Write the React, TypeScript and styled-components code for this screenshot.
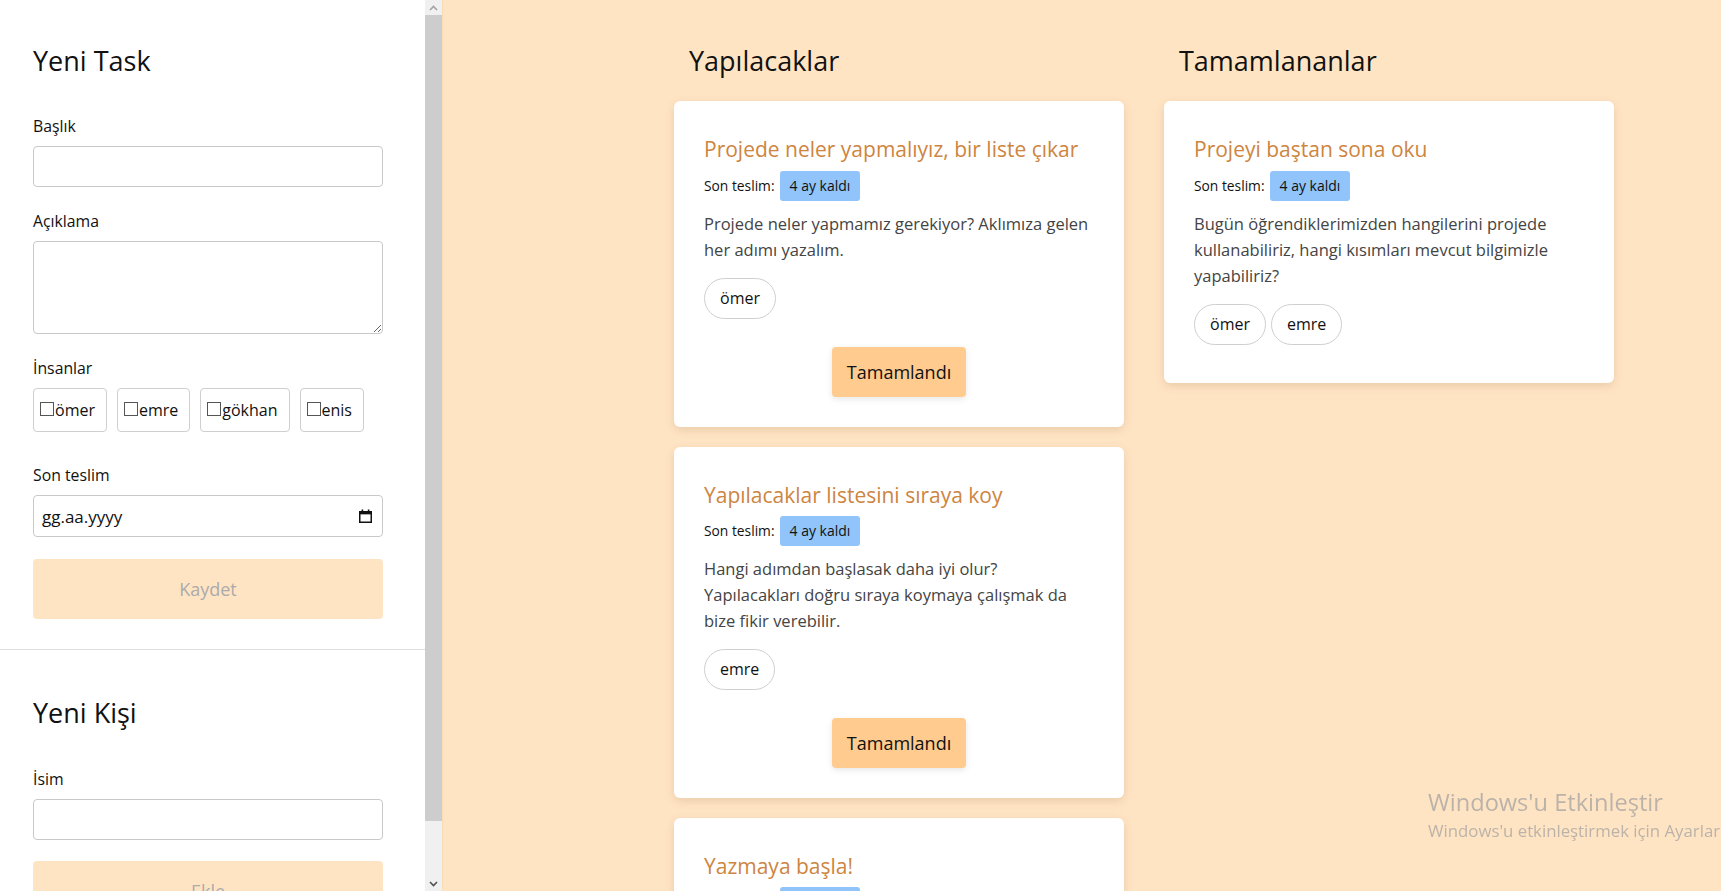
import React from "react";
import styled, { createGlobalStyle } from "styled-components";

const GlobalStyle = createGlobalStyle`
  html, body { margin: 0; padding: 0; height: 100%; overflow: hidden; }
  body {
    font-family: "Open Sans", "Noto Sans", sans-serif;
    background: #ffe4c4;
    color: #111;
  }
  *, *::before, *::after { box-sizing: border-box; }
`;

const Shell = styled.div`
  display: flex;
  height: 100vh;
`;

const Sidebar = styled.aside`
  width: 442px;
  flex: none;
  height: 100%;
  display: flex;
  background: #fff;
`;

const SidebarContent = styled.div`
  width: 425px;
  flex: none;
  height: 100%;
  overflow: hidden;
`;

const Scrollbar = styled.div`
  width: 17px;
  flex: none;
  display: flex;
  flex-direction: column;
  background: #f0f0f0;
`;

const ScrollArrow = styled.div<{ $dark?: boolean }>`
  height: 15px;
  flex: none;
  display: flex;
  align-items: center;
  justify-content: center;
  color: ${(p) => (p.$dark ? "#505050" : "#a3a3a3")};
`;

const ScrollThumb = styled.div`
  height: 806px;
  flex: none;
  background: #cdcdcd;
`;

const ScrollRest = styled.div`
  flex: 1;
`;

const Section = styled.section<{ $top: number; $bottom: number }>`
  padding: ${(p) => p.$top}px 42px ${(p) => p.$bottom}px 33px;
  & + & { border-top: 1px solid #dedede; }
`;

const FormTitle = styled.h2`
  font-size: 27px;
  font-weight: 400;
  line-height: 1.2;
  margin: 0 0 37px;
`;

const Group = styled.div<{ $extra?: number }>`
  display: flex;
  flex-direction: column;
  margin-bottom: ${(p) => 22 + (p.$extra ?? 0)}px;
`;

const Label = styled.label`
  font-size: 15.8px;
  line-height: 24px;
  margin-bottom: 8px;
`;

const TextInput = styled.input`
  width: 100%;
  height: 41px;
  border: 1px solid #c9c9c9;
  border-radius: 4px;
  font: inherit;
  padding: 0 8px;
`;

const TextArea = styled.textarea`
  width: 100%;
  height: 93px;
  border: 1px solid #c9c9c9;
  border-radius: 4px;
  font: inherit;
  padding: 6px 8px;
  resize: vertical;
`;

const CheckRow = styled.div`
  display: flex;
  gap: 10px;
`;

const CheckItem = styled.label`
  display: flex;
  align-items: center;
  height: 44px;
  padding: 0 11px 0 6px;
  border: 1px solid #cfcfcf;
  border-radius: 4px;
  font-size: 16px;
`;

const CheckBox = styled.span`
  display: inline-block;
  width: 14px;
  height: 14px;
  border: 1.5px solid #555;
  margin: 0 1px 2px 0;
`;

const DateField = styled.div`
  display: flex;
  align-items: center;
  justify-content: space-between;
  height: 42px;
  padding: 0 10px 0 8px;
  border: 1px solid #c9c9c9;
  border-radius: 4px;
  font-size: 17px;
`;

const SubmitButton = styled.button`
  width: 100%;
  height: 60px;
  border: none;
  border-radius: 4px;
  background: #ffe4c4;
  color: #ababab;
  font-family: inherit;
  font-size: 18px;
`;

const Board = styled.main`
  flex: 1;
  display: flex;
  align-items: flex-start;
  gap: 40px;
  padding: 45px 0 0 231px;
  border-left: 1px solid #fcdab3;
  overflow: hidden;
`;

const Column = styled.div`
  width: 450px;
  flex: none;
  display: flex;
  flex-direction: column;
  gap: 20px;
`;

const ColumnTitle = styled.h2`
  font-size: 27px;
  font-weight: 400;
  line-height: 1.2;
  margin: 0 0 4px 15px;
`;

const Card = styled.div`
  background: #fff;
  border-radius: 6px;
  padding: 36px 30px 30px;
  box-shadow: 0 3px 10px rgba(120, 80, 30, 0.16);
`;

const CardTitle = styled.h3`
  font-size: 21px;
  font-weight: 400;
  line-height: 1.2;
  color: #cd853f;
  margin: 0 0 8px;
`;

const Meta = styled.div`
  display: flex;
  align-items: center;
  gap: 5px;
  font-size: 13.8px;
`;

const Badge = styled.span`
  display: inline-block;
  height: 30px;
  line-height: 30px;
  padding: 0 10px;
  background: #90c4fa;
  border-radius: 3px;
  font-size: 14px;
`;

const Description = styled.p`
  margin: 10px 0 0;
  font-size: 16.5px;
  line-height: 26px;
  color: #444;
`;

const Chips = styled.div`
  display: flex;
  gap: 5px;
  margin: 15px 0 8px;
`;

const Chip = styled.span`
  display: flex;
  align-items: center;
  height: 41px;
  padding: 0 15px;
  border: 1px solid #cfcfcf;
  border-radius: 21px;
  font-size: 16px;
`;

const Actions = styled.div`
  display: flex;
  justify-content: center;
  margin-top: 28px;
`;

const DoneButton = styled.button`
  height: 50px;
  padding: 0 15px;
  border: none;
  border-radius: 4px;
  background: #ffcb8e;
  color: #111;
  font-family: inherit;
  font-size: 18px;
  box-shadow: 0 2px 6px rgba(0, 0, 0, 0.1);
`;

const Watermark = styled.div`
  position: fixed;
  left: 1428px;
  top: 788px;
  color: #bbb3a9;
  white-space: nowrap;
  pointer-events: none;
`;

const WatermarkTitle = styled.div`
  font-size: 23.6px;
  line-height: 1.2;
`;

const WatermarkText = styled.div`
  font-size: 16.8px;
  line-height: 1.2;
  margin-top: 5px;
`;

const CalendarIcon = () => (
  <svg width="13" height="14" viewBox="0 0 13 14" aria-hidden>
    <rect x="0.75" y="2.75" width="11.5" height="10.5" fill="none" stroke="#111" strokeWidth="1.5" />
    <rect x="0.75" y="2.75" width="11.5" height="2.6" fill="#111" />
    <rect x="2.6" y="0.5" width="1.6" height="3" fill="#111" />
    <rect x="8.8" y="0.5" width="1.6" height="3" fill="#111" />
  </svg>
);

const Chevron = ({ up }: { up?: boolean }) => (
  <svg width="9" height="6" viewBox="0 0 9 6" aria-hidden>
    <path
      d={up ? "M1 5 L4.5 1.5 L8 5" : "M1 1 L4.5 4.5 L8 1"}
      fill="none"
      stroke="currentColor"
      strokeWidth="1.6"
    />
  </svg>
);

type Task = {
  title: string;
  desc?: string;
  people: string[];
  done?: boolean;
};

const todo: Task[] = [
  {
    title: "Projede neler yapmalıyız, bir liste çıkar",
    desc: "Projede neler yapmamız gerekiyor? Aklımıza gelen her adımı yazalım.",
    people: ["ömer"],
  },
  {
    title: "Yapılacaklar listesini sıraya koy",
    desc: "Hangi adımdan başlasak daha iyi olur? Yapılacakları doğru sıraya koymaya çalışmak da bize fikir verebilir.",
    people: ["emre"],
  },
  {
    title: "Yazmaya başla!",
    desc: "Projeyi yazmaya başlayalım.",
    people: ["gökhan"],
  },
];

const done: Task[] = [
  {
    title: "Projeyi baştan sona oku",
    desc: "Bugün öğrendiklerimizden hangilerini projede kullanabiliriz, hangi kısımları mevcut bilgimizle yapabiliriz?",
    people: ["ömer", "emre"],
    done: true,
  },
];

const TaskCard = ({ task }: { task: Task }) => (
  <Card>
    <CardTitle>{task.title}</CardTitle>
    <Meta>
      <span>Son teslim:</span>
      <Badge>4 ay kaldı</Badge>
    </Meta>
    {task.desc && <Description>{task.desc}</Description>}
    <Chips>
      {task.people.map((p) => (
        <Chip key={p}>{p}</Chip>
      ))}
    </Chips>
    {!task.done && (
      <Actions>
        <DoneButton>Tamamlandı</DoneButton>
      </Actions>
    )}
  </Card>
);

export default function App() {
  return (
    <>
      <GlobalStyle />
      <Shell>
        <Sidebar>
          <SidebarContent>
            <Section $top={45} $bottom={30}>
              <FormTitle>Yeni Task</FormTitle>
              <Group>
                <Label>Başlık</Label>
                <TextInput />
              </Group>
              <Group>
                <Label>Açıklama</Label>
                <TextArea />
              </Group>
              <Group $extra={9}>
                <Label>İnsanlar</Label>
                <CheckRow>
                  {["ömer", "emre", "gökhan", "enis"].map((n) => (
                    <CheckItem key={n}>
                      <CheckBox />
                      {n}
                    </CheckItem>
                  ))}
                </CheckRow>
              </Group>
              <Group>
                <Label>Son teslim</Label>
                <DateField>
                  <span>gg.aa.yyyy</span>
                  <CalendarIcon />
                </DateField>
              </Group>
              <SubmitButton disabled>Kaydet</SubmitButton>
            </Section>
            <Section $top={47} $bottom={33}>
              <FormTitle>Yeni Kişi</FormTitle>
              <Group $extra={-1}>
                <Label>İsim</Label>
                <TextInput />
              </Group>
              <SubmitButton disabled>Ekle</SubmitButton>
            </Section>
          </SidebarContent>
          <Scrollbar>
            <ScrollArrow>
              <Chevron up />
            </ScrollArrow>
            <ScrollThumb />
            <ScrollRest />
            <ScrollArrow $dark>
              <Chevron />
            </ScrollArrow>
          </Scrollbar>
        </Sidebar>
        <Board>
          <Column>
            <ColumnTitle>Yapılacaklar</ColumnTitle>
            {todo.map((t) => (
              <TaskCard key={t.title} task={t} />
            ))}
          </Column>
          <Column>
            <ColumnTitle>Tamamlananlar</ColumnTitle>
            {done.map((t) => (
              <TaskCard key={t.title} task={t} />
            ))}
          </Column>
        </Board>
      </Shell>
      <Watermark>
        <WatermarkTitle>Windows'u Etkinleştir</WatermarkTitle>
        <WatermarkText>Windows'u etkinleştirmek için Ayarlar'a gidin.</WatermarkText>
      </Watermark>
    </>
  );
}
